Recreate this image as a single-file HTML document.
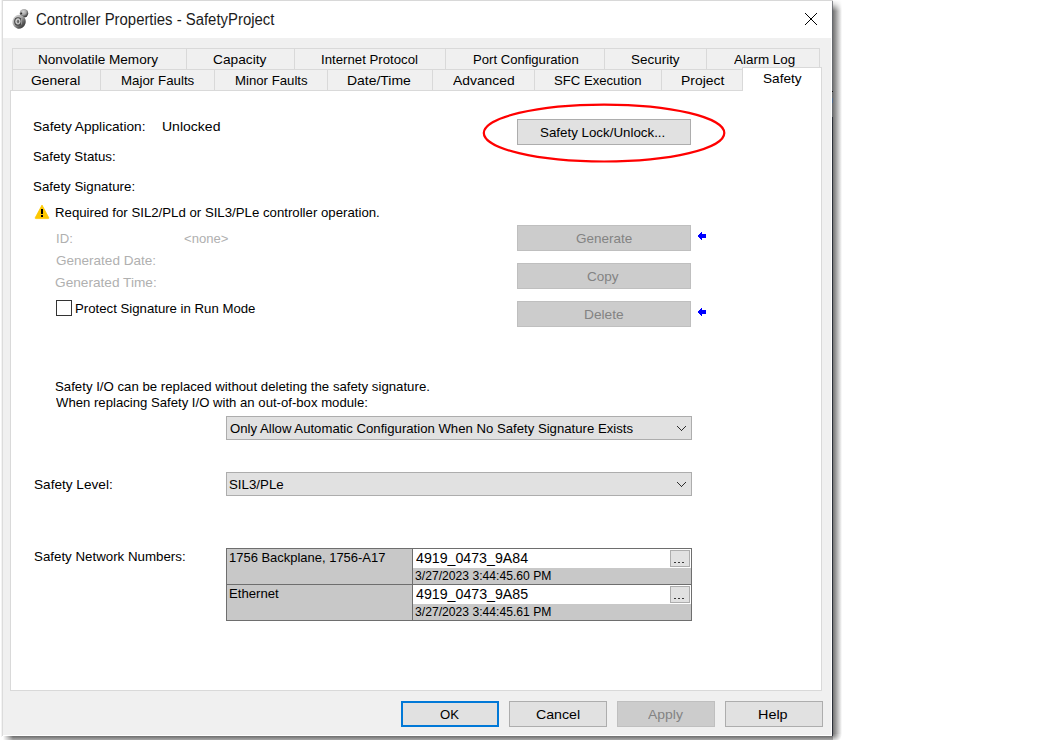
<!DOCTYPE html>
<html><head><meta charset="utf-8">
<style>
html,body{margin:0;padding:0;}
body{width:1037px;height:740px;overflow:hidden;background:#fff;position:relative;font-family:"Liberation Sans",sans-serif;color:#000;}
.a{position:absolute;}
.x{position:absolute;white-space:nowrap;transform-origin:0 0;}
.tb{position:absolute;box-sizing:border-box;border:1px solid #d9d9d9;background:#f0f0f0;}
.btn{position:absolute;box-sizing:border-box;border:1px solid #adadad;background:#e1e1e1;}
.dis{background:#cccccc;border-color:#bfbfbf;}
.gl{position:absolute;background:#6e6e6e;}
.gc{position:absolute;background:#c8c8c8;}
.gw{position:absolute;background:#fff;}
</style></head>
<body>
<!-- window frame + shadow -->
<div class="a" style="left:1px;top:0;width:1px;height:737px;background:#f3f3f3;"></div>
<div class="a" style="left:2px;top:0;width:831px;height:1px;background:#d8d8d8;"></div>
<div class="a" style="left:2px;top:0;width:1px;height:736px;background:#dcdcdc;"></div>
<div class="a" style="left:833px;top:0;width:9px;height:734px;background:linear-gradient(to bottom,#fff 0,rgba(255,255,255,0.75) 4px,rgba(255,255,255,0) 11px),linear-gradient(to right,#747474,#9a9a9a 30%,#c6c6c6 60%,#ededed 88%,#fff);"></div>
<div class="a" style="left:3px;top:736px;width:830px;height:4px;background:linear-gradient(to right,#fff 0,rgba(255,255,255,0.6) 4px,rgba(255,255,255,0) 10px),linear-gradient(to bottom,#6e6e6e,#808080 35%,#959595 65%,#a8a8a8);"></div>
<div class="a" style="left:833px;top:734px;width:9px;height:6px;background:radial-gradient(circle at 0 0,#7a7a7a 0,#a8a8a8 3px,#d8d8d8 6px,#fff 9px);"></div>
<div class="a" style="left:3px;top:1px;width:829px;height:735px;background:#fff;"></div>
<div class="a" style="left:3px;top:38px;width:828px;height:697px;background:#f0f0f0;"></div>
<div class="a" style="left:832px;top:1px;width:1px;height:116px;background:linear-gradient(to bottom,#8a8c90 0,#66696e 10px,#66696e);"></div>
<div class="a" style="left:832px;top:91px;width:1px;height:1px;background:#111;"></div>
<div class="a" style="left:832px;top:98px;width:1px;height:5px;background:#4d6a8c;"></div>
<div class="a" style="left:832px;top:117px;width:1px;height:619px;background:#2b2f38;"></div>

<!-- title icon -->
<svg class="a" style="left:11px;top:8px;" width="18" height="22" viewBox="0 0 18 22">
<defs>
<radialGradient id="s1" cx="0.42" cy="0.32" r="0.7"><stop offset="0" stop-color="#d4d4d4"/><stop offset="0.5" stop-color="#a6a6a6"/><stop offset="0.85" stop-color="#4a4a4a"/><stop offset="1" stop-color="#2a2a2a"/></radialGradient>
<linearGradient id="s2" x1="0" y1="0.2" x2="1" y2="0.8"><stop offset="0" stop-color="#d4d4d4"/><stop offset="0.4" stop-color="#acacac"/><stop offset="0.75" stop-color="#585858"/><stop offset="1" stop-color="#353535"/></linearGradient>
</defs>
<circle cx="13" cy="5.2" r="4.2" fill="url(#s1)"/>
<ellipse cx="10.2" cy="5.4" rx="1" ry="0.9" fill="#2e2e2e"/>
<ellipse cx="8.1" cy="13.7" rx="6.6" ry="7" fill="url(#s2)" transform="rotate(15 8.1 13.7)"/>
<ellipse cx="7" cy="13.4" rx="3.3" ry="3.7" fill="none" stroke="#464646" stroke-width="1.1"/>
<ellipse cx="7" cy="13.5" rx="1.9" ry="2.5" fill="#8c8c8c" stroke="#dadada" stroke-width="0.9"/>
<rect x="6.6" y="12.3" width="1" height="2.4" fill="#4a4a4a"/>
<rect x="10" y="11" width="1" height="5.5" fill="#c0c0c0" opacity="0.6"/>
</svg>
<!-- close X -->
<svg class="a" style="left:805px;top:13px;" width="12" height="12" viewBox="0 0 12 12"><path fill="#000" d="M0 0h1v1h-1zM11 0h1v1h-1zM1 1h1v1h-1zM10 1h1v1h-1zM2 2h1v1h-1zM9 2h1v1h-1zM3 3h1v1h-1zM8 3h1v1h-1zM4 4h1v1h-1zM7 4h1v1h-1zM5 5h1v1h-1zM6 5h1v1h-1zM6 6h1v1h-1zM5 6h1v1h-1zM7 7h1v1h-1zM4 7h1v1h-1zM8 8h1v1h-1zM3 8h1v1h-1zM9 9h1v1h-1zM2 9h1v1h-1zM10 10h1v1h-1zM1 10h1v1h-1zM11 11h1v1h-1zM0 11h1v1h-1z"/></svg>

<!-- page panel -->
<div class="a" style="left:10px;top:90px;width:810px;height:599px;border:1px solid #d9d9d9;background:#fff;"></div>
<!-- tabs -->
<div class="tb" style="left:12px;top:48px;width:175px;height:22px;"></div>
<div class="tb" style="left:186px;top:48px;width:109px;height:22px;"></div>
<div class="tb" style="left:294px;top:48px;width:152px;height:22px;"></div>
<div class="tb" style="left:445px;top:48px;width:160px;height:22px;"></div>
<div class="tb" style="left:604px;top:48px;width:103px;height:22px;"></div>
<div class="tb" style="left:706px;top:48px;width:114px;height:22px;"></div>
<div class="tb" style="left:12px;top:69px;width:89px;height:22px;"></div>
<div class="tb" style="left:100px;top:69px;width:115px;height:22px;"></div>
<div class="tb" style="left:214px;top:69px;width:114px;height:22px;"></div>
<div class="tb" style="left:327px;top:69px;width:106px;height:22px;"></div>
<div class="tb" style="left:432px;top:69px;width:103px;height:22px;"></div>
<div class="tb" style="left:534px;top:69px;width:128px;height:22px;"></div>
<div class="tb" style="left:661px;top:69px;width:82px;height:22px;"></div>
<div class="tb" style="left:742px;top:67px;width:80px;height:24px;background:#fff;border-bottom:none;"></div>

<!-- content -->
<svg class="a" style="left:34px;top:204px;" width="16" height="16" viewBox="0 0 16 16">
<path d="M8 1.1 L14.8 13.8 Q15 14.6 14.2 14.6 H1.8 Q1 14.6 1.2 13.8 Z" fill="#fdc800" stroke="#fdc800" stroke-width="0.8" stroke-linejoin="round"/>
<rect x="7" y="5" width="2" height="5" fill="#000"/><rect x="7" y="11" width="2" height="2" fill="#000"/>
</svg>
<div class="a" style="left:56px;top:300px;width:14px;height:14px;border:1px solid #333;background:#fff;"></div>

<div class="btn" style="left:517px;top:119px;width:174px;height:26px;"></div>
<div class="btn dis" style="left:517px;top:225px;width:174px;height:26px;"></div>
<div class="btn dis" style="left:517px;top:263px;width:174px;height:26px;"></div>
<div class="btn dis" style="left:517px;top:301px;width:174px;height:26px;"></div>
<svg class="a" style="left:698px;top:232px;" width="8" height="8" viewBox="0 0 8 8"><path fill="#0000ff" d="M0 3h1v2h-1zM1 2h1v4h-1zM2 1h1v6h-1zM3 0h1v8h-1zM4 2h4v4h-4z"/></svg>
<svg class="a" style="left:698px;top:308px;" width="8" height="8" viewBox="0 0 8 8"><path fill="#0000ff" d="M0 3h1v2h-1zM1 2h1v4h-1zM2 1h1v6h-1zM3 0h1v8h-1zM4 2h4v4h-4z"/></svg>

<!-- red ellipse -->
<svg class="a" style="left:470px;top:95px;" width="270" height="75" viewBox="0 0 270 75"><ellipse cx="134.05" cy="38.05" rx="120.25" ry="28.45" fill="none" stroke="#ff0000" stroke-width="2.2"/></svg>

<div class="btn" style="left:226px;top:416px;width:466px;height:24px;"></div>
<svg class="a" style="left:677px;top:426px;" width="9" height="5" viewBox="0 0 9 5"><path fill="#2e2e2e" d="M0 0h1v1h-1zM1 1h1v1h-1zM2 2h1v1h-1zM3 3h1v1h-1zM4 4h1v1h-1zM5 3h1v1h-1zM6 2h1v1h-1zM7 1h1v1h-1zM8 0h1v1h-1z"/></svg>
<div class="btn" style="left:226px;top:472px;width:466px;height:24px;"></div>
<svg class="a" style="left:677px;top:482px;" width="9" height="5" viewBox="0 0 9 5"><path fill="#2e2e2e" d="M0 0h1v1h-1zM1 1h1v1h-1zM2 2h1v1h-1zM3 3h1v1h-1zM4 4h1v1h-1zM5 3h1v1h-1zM6 2h1v1h-1zM7 1h1v1h-1zM8 0h1v1h-1z"/></svg>

<!-- grid -->
<div class="gl" style="left:226px;top:548px;width:466px;height:73px;"></div>
<div class="gc" style="left:227px;top:549px;width:185px;height:35px;"></div>
<div class="gc" style="left:227px;top:585px;width:185px;height:35px;"></div>
<div class="gw" style="left:413px;top:549px;width:278px;height:19px;"></div>
<div class="gc" style="left:413px;top:568px;width:278px;height:16px;"></div>
<div class="gw" style="left:413px;top:585px;width:278px;height:19px;"></div>
<div class="gc" style="left:413px;top:604px;width:278px;height:16px;"></div>
<div class="btn" style="left:670px;top:550px;width:20px;height:17px;"></div>
<div class="btn" style="left:670px;top:586px;width:20px;height:17px;"></div>
<svg class="a" style="left:670px;top:550px;" width="20" height="17"><path fill="#3a3a3a" d="M4 12h2v1h-2zM8 12h2v1h-2zM12 12h2v1h-2z"/></svg>
<svg class="a" style="left:670px;top:586px;" width="20" height="17"><path fill="#3a3a3a" d="M4 12h2v1h-2zM8 12h2v1h-2zM12 12h2v1h-2z"/></svg>

<!-- bottom buttons -->
<div class="btn" style="left:401px;top:701px;width:98px;height:26px;border:2px solid #0078d7;"></div>
<div class="btn" style="left:509px;top:701px;width:98px;height:26px;"></div>
<div class="btn dis" style="left:617px;top:701px;width:98px;height:26px;"></div>
<div class="btn" style="left:725px;top:701px;width:98px;height:26px;"></div>
<div class="x" style="left:35.57px;top:11px;font-size:16px;line-height:18px;color:#1c1c1c;transform:scaleX(0.9306)">Controller Properties - SafetyProject</div>
<div class="x" style="left:38.4px;top:52px;font-size:13.6px;line-height:15.6px;color:#000;transform:scaleX(0.9992)">Nonvolatile Memory</div>
<div class="x" style="left:213.19px;top:52px;font-size:13.6px;line-height:15.6px;color:#000;transform:scaleX(1.0096)">Capacity</div>
<div class="x" style="left:321.43px;top:52px;font-size:13.6px;line-height:15.6px;color:#000;transform:scaleX(0.9724)">Internet Protocol</div>
<div class="x" style="left:472.54px;top:52px;font-size:13.6px;line-height:15.6px;color:#000;transform:scaleX(0.9648)">Port Configuration</div>
<div class="x" style="left:631.11px;top:52px;font-size:13.6px;line-height:15.6px;color:#000;transform:scaleX(0.9896)">Security</div>
<div class="x" style="left:734.3px;top:52px;font-size:13.6px;line-height:15.6px;color:#000;transform:scaleX(0.9885)">Alarm Log</div>
<div class="x" style="left:31.48px;top:73px;font-size:13.6px;line-height:15.6px;color:#000;transform:scaleX(1.0174)">General</div>
<div class="x" style="left:120.82px;top:73px;font-size:13.6px;line-height:15.6px;color:#000;transform:scaleX(0.9795)">Major Faults</div>
<div class="x" style="left:234.53px;top:73px;font-size:13.6px;line-height:15.6px;color:#000;transform:scaleX(0.9712)">Minor Faults</div>
<div class="x" style="left:347.37px;top:73px;font-size:13.6px;line-height:15.6px;color:#000;transform:scaleX(1.0262)">Date/Time</div>
<div class="x" style="left:453.0px;top:73px;font-size:13.6px;line-height:15.6px;color:#000;transform:scaleX(1.02)">Advanced</div>
<div class="x" style="left:554.43px;top:73px;font-size:13.6px;line-height:15.6px;color:#000;transform:scaleX(0.9663)">SFC Execution</div>
<div class="x" style="left:681.38px;top:73px;font-size:13.6px;line-height:15.6px;color:#000;transform:scaleX(1.0244)">Project</div>
<div class="x" style="left:763.4px;top:71px;font-size:13.6px;line-height:15.6px;color:#000;transform:scaleX(1.0027)">Safety</div>
<div class="x" style="left:33.19px;top:119px;font-size:13.6px;line-height:15.6px;color:#000;transform:scaleX(1.0055)">Safety Application:</div>
<div class="x" style="left:161.67px;top:119px;font-size:13.6px;line-height:15.6px;color:#000;transform:scaleX(1.0309)">Unlocked</div>
<div class="x" style="left:33.42px;top:149px;font-size:13.6px;line-height:15.6px;color:#000;transform:scaleX(0.9768)">Safety Status:</div>
<div class="x" style="left:33.32px;top:179px;font-size:13.6px;line-height:15.6px;color:#000;transform:scaleX(0.9794)">Safety Signature:</div>
<div class="x" style="left:54.53px;top:205px;font-size:13.6px;line-height:15.6px;color:#000;transform:scaleX(0.9723)">Required for SIL2/PLd or SIL3/PLe controller operation.</div>
<div class="x" style="left:55.73px;top:231px;font-size:13.6px;line-height:15.6px;color:#b0b0b0;transform:scaleX(0.9667)">ID:</div>
<div class="x" style="left:183.74px;top:231px;font-size:13.6px;line-height:15.6px;color:#b0b0b0;transform:scaleX(0.9636)">&lt;none&gt;</div>
<div class="x" style="left:55.51px;top:253px;font-size:13.6px;line-height:15.6px;color:#b0b0b0;transform:scaleX(0.9949)">Generated Date:</div>
<div class="x" style="left:55.49px;top:275px;font-size:13.6px;line-height:15.6px;color:#b0b0b0;transform:scaleX(1.0051)">Generated Time:</div>
<div class="x" style="left:74.63px;top:301px;font-size:13.6px;line-height:15.6px;color:#000;transform:scaleX(0.9707)">Protect Signature in Run Mode</div>
<div class="x" style="left:540.42px;top:125px;font-size:13.6px;line-height:15.6px;color:#000;transform:scaleX(0.981)">Safety Lock/Unlock...</div>
<div class="x" style="left:575.81px;top:231px;font-size:13.6px;line-height:15.6px;color:#838383;transform:scaleX(0.9927)">Generate</div>
<div class="x" style="left:587.4px;top:269px;font-size:13.6px;line-height:15.6px;color:#838383;transform:scaleX(0.9968)">Copy</div>
<div class="x" style="left:583.79px;top:307px;font-size:13.6px;line-height:15.6px;color:#838383;transform:scaleX(1.0105)">Delete</div>
<div class="x" style="left:55.43px;top:379px;font-size:13.6px;line-height:15.6px;color:#000;transform:scaleX(0.9728)">Safety I/O can be replaced without deleting the safety signature.</div>
<div class="x" style="left:56.4px;top:395px;font-size:13.6px;line-height:15.6px;color:#000;transform:scaleX(0.9667)">When replacing Safety I/O with an out-of-box module:</div>
<div class="x" style="left:229.53px;top:421px;font-size:13.6px;line-height:15.6px;color:#000;transform:scaleX(0.968)">Only Allow Automatic Configuration When No Safety Signature Exists</div>
<div class="x" style="left:33.5px;top:477px;font-size:13.6px;line-height:15.6px;color:#000;transform:scaleX(1.0013)">Safety Level:</div>
<div class="x" style="left:229.42px;top:477px;font-size:13.6px;line-height:15.6px;color:#000;transform:scaleX(0.9778)">SIL3/PLe</div>
<div class="x" style="left:33.52px;top:549px;font-size:13.6px;line-height:15.6px;color:#000;transform:scaleX(0.9791)">Safety Network Numbers:</div>
<div class="x" style="left:229.05px;top:550px;font-size:13.6px;line-height:15.6px;color:#000;transform:scaleX(0.9537)">1756 Backplane, 1756-A17</div>
<div class="x" style="left:228.53px;top:586px;font-size:13.6px;line-height:15.6px;color:#000;transform:scaleX(0.966)">Ethernet</div>
<div class="x" style="left:415.7px;top:549px;font-size:15px;line-height:17px;color:#000;transform:scaleX(0.9458)">4919_0473_9A84</div>
<div class="x" style="left:414.77px;top:568px;font-size:13px;line-height:15px;color:#000;transform:scaleX(0.934)">3/27/2023 3:44:45.60 PM</div>
<div class="x" style="left:415.7px;top:585px;font-size:15px;line-height:17px;color:#000;transform:scaleX(0.9466)">4919_0473_9A85</div>
<div class="x" style="left:414.77px;top:604px;font-size:13px;line-height:15px;color:#000;transform:scaleX(0.934)">3/27/2023 3:44:45.61 PM</div>
<div class="x" style="left:440.23px;top:707px;font-size:13.6px;line-height:15.6px;color:#000;transform:scaleX(0.9667)">OK</div>
<div class="x" style="left:536.26px;top:707px;font-size:13.6px;line-height:15.6px;color:#000;transform:scaleX(1.0425)">Cancel</div>
<div class="x" style="left:648.0px;top:707px;font-size:13.6px;line-height:15.6px;color:#838383;transform:scaleX(1.0265)">Apply</div>
<div class="x" style="left:758.14px;top:707px;font-size:13.6px;line-height:15.6px;color:#000;transform:scaleX(1.0593)">Help</div>
</body></html>
